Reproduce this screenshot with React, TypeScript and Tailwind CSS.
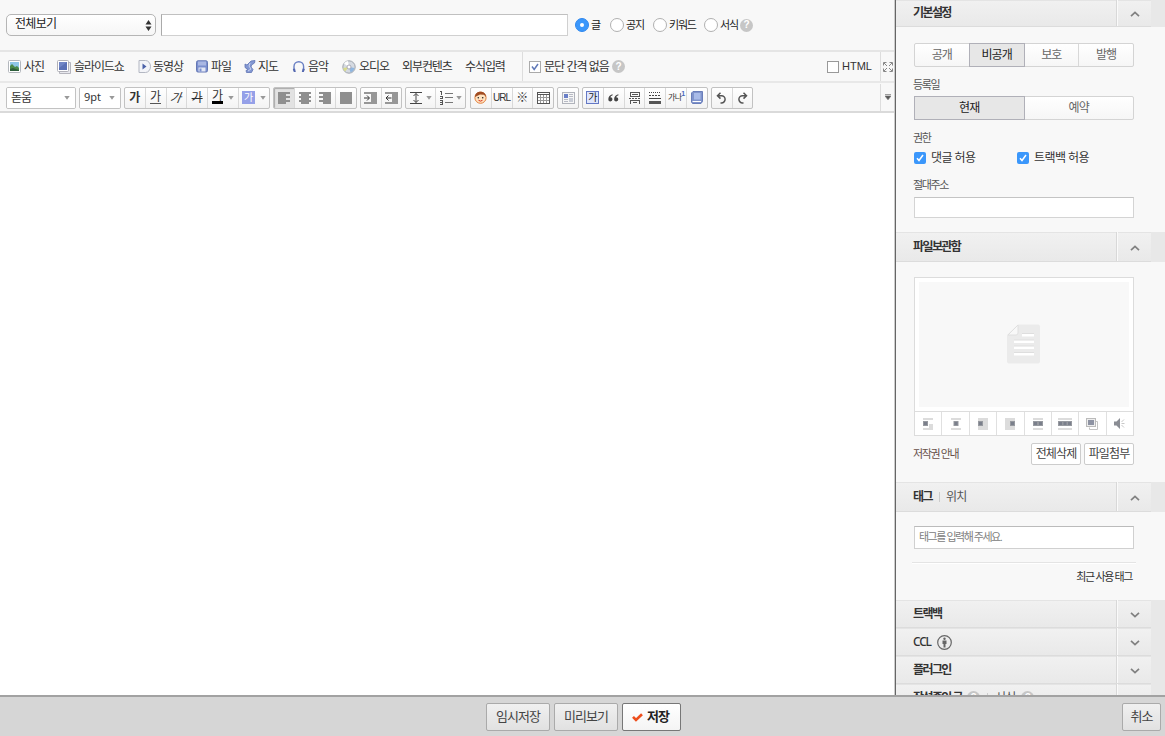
import React, { useState } from 'react';

const FONT = "font-['Liberation_Sans','Noto_Sans_CJK_KR',sans-serif]";

/* ---------- toolbar icons ---------- */

const PhotoIcon = () => (
  <svg width="13" height="13" viewBox="0 0 13 13">
    <rect x=".5" y=".5" width="12" height="12" rx="1" fill="#fff" stroke="#b3b7bd" />
    <rect x="2" y="2" width="9" height="9" fill="#8fc7e8" />
    <path d="M2 11V6l2-2 3 3 2-1 2 2v3z" fill="#4b8a4a" />
    <path d="M2 11V9l3-1 6 2v1z" fill="#2f5f3c" />
  </svg>
);

const SlideIcon = () => (
  <svg width="14" height="14" viewBox="0 0 14 14">
    <path d="M11.5 2.500H13.500V13.500H2.500V11.500" fill="#e8e8ee" stroke="#b5b5bd" />
    <rect x=".5" y=".5" width="11" height="11" rx="1" fill="#fff" stroke="#b0b0b8" />
    <rect x="2" y="2" width="8" height="8" fill="#5a70b6" />
    <path d="M2 2h8L2 8z" fill="#7085c6" />
  </svg>
);

const VideoIcon = () => (
  <svg width="13" height="13" viewBox="0 0 13 13">
    <path d="M1 .5H7.500A5 6 0 0 1 7.500 12.500H1z" fill="#f3f4f8" stroke="#b3b7c2" />
    <path d="M4.500 3.500L8.500 6.500L4.500 9.500z" fill="#4a60a8" />
  </svg>
);

const FileIcon = () => (
  <svg width="12" height="13" viewBox="0 0 12 13">
    <rect x=".5" y=".8" width="11" height="11.200" rx="1.500" fill="#7a8fce" stroke="#6477b4" />
    <rect x="2" y="1.500" width="8" height="4" fill="#a9b7e3" />
    <rect x="2.500" y="7.500" width="7" height="4" fill="#e4e8f5" />
    <rect x="3.500" y="8.500" width="2" height="3" fill="#7a8fce" />
  </svg>
);

const MapIcon = () => (
  <svg width="12" height="13" viewBox="0 0 12 13">
    <path d="M7 1l4-.5-.5 2.500L7.500 5 7 7l2 2.500-1.500 3H2.500L2 10.500l2-1L1 7.500V4l2 1z" fill="#8398d3" stroke="#5f74b4" strokeWidth=".8" />
    <path d="M6 3L5 6l2 3-3 2" stroke="#c9d3f0" fill="none" />
  </svg>
);

const MusicIcon = () => (
  <svg width="14" height="13" viewBox="0 0 14 13">
    <path d="M2 10.500V6.500a4.800 4.800 0 0 1 9.600 0v4" fill="none" stroke="#6a80c4" strokeWidth="1.400" />
    <path d="M.8 9l2.200-.5.800 3.500H1.800zM12.800 9l-2.200-.5-.8 3.500h2z" fill="#5468b0" />
  </svg>
);

const AudioIcon = () => (
  <svg width="14" height="14" viewBox="0 0 14 14">
    <circle cx="7" cy="7" r="6.200" fill="#d5dae1" stroke="#a0a5ad" />
    <path d="M7 7L2 3.500A6 6 0 0 1 6 1z" fill="#fff" />
    <path d="M7 7l5.500 1A6 6 0 0 1 8.500 12.500z" fill="#8fb6df" />
    <path d="M7 7L3 11.500A6 6 0 0 1 1.200 8z" fill="#d9dc8d" />
    <circle cx="7" cy="7" r="2" fill="#fff" stroke="#99a" strokeWidth=".8" />
  </svg>
);

const Help = () => (
  <span className="flex h-[13px] w-[13px] shrink-0 items-center justify-center rounded-full bg-[#c6c6c6] text-[10px] font-bold leading-none tracking-normal text-white">?</span>
);

const Caret = () => (
  <svg width="6" height="4" viewBox="0 0 6 4" className="shrink-0"><path d="M.3 0h5.400L3 3.800z" fill="#999" /></svg>
);

/* Paragraph blocks: one bar list per alignment, [x, width] for every line */
const Align = ({ rows }: { rows: number[][] }) => (
  <svg width="12" height="12" viewBox="0 0 12 12" shapeRendering="crispEdges" fill="#8f8f8f">
    {rows.map(([x, w], i) => <rect key={i} x={x} y={i * 2} width={w} height="2" />)}
  </svg>
);

const Indent = ({ out = false }: { out?: boolean }) => (
  <svg width="13" height="12" viewBox="0 0 13 12">
    <g fill="#979797" shapeRendering="crispEdges">
      <rect x="0" y="0" width="13" height="2" />
      <rect x="7" y="2" width="6" height="8" />
      <rect x="0" y="10" width="13" height="2" />
    </g>
    <path d={out ? 'M6.500 6H1M3.500 3.500L1 6l2.500 2.500' : 'M0 6h5M3 3.500L5.500 6 3 8.500'} fill="none" stroke="#333" />
  </svg>
);

const LineHeight = () => (
  <svg width="12" height="12" viewBox="0 0 12 12" fill="none" stroke="#444">
    <path d="M0 .5h12M0 11.500h12M6 1.500v9M3.500 4L6 1.500 8.500 4M3.500 8L6 10.500 8.500 8" />
  </svg>
);

const ListIcon = () => (
  <svg width="13" height="14" viewBox="0 0 13 14" fill="none" shapeRendering="crispEdges">
    <path d="M5 2.500h8M5 6.500h8M5 11.500h8" stroke="#777" />
    <path d="M0 .5h1.500v3M0 5.500h2v2H0M0 9.500h2.500v4H0M0 11.500h2" stroke="#555" />
  </svg>
);

const FaceIcon = () => (
  <svg width="13" height="13" viewBox="0 0 13 13">
    <circle cx="6.500" cy="6.700" r="5.600" fill="#ffe3c0" stroke="#e0803f" />
    <path d="M1 6C1 2 4 .7 6.500.7S12 2 12 6L10 3.800 6 3.500 3 5z" fill="#a04c22" />
    <circle cx="4.300" cy="6.800" r=".8" fill="#222" />
    <circle cx="8.700" cy="6.800" r=".8" fill="#222" />
    <path d="M4.500 9.300q2 1.600 4 0" stroke="#d52f1c" fill="none" />
  </svg>
);

const TableIcon = () => (
  <svg width="13" height="12" viewBox="0 0 13 12" shapeRendering="crispEdges">
    <rect x="0" y="0" width="13" height="12" fill="#fff" />
    <path d="M3.500 3v9M6.500 3v9M9.500 3v9M0 5.500h13M0 8.500h13" stroke="#999" />
    <path d="M.5 .5h12v11H.5zM0 2.500h13" fill="none" stroke="#555" />
  </svg>
);

const LayoutIcon = () => (
  <svg width="13" height="12" viewBox="0 0 13 12" shapeRendering="crispEdges">
    <rect x=".5" y=".5" width="12" height="11" fill="#f6f6f6" stroke="#b0b3bb" />
    <rect x="2" y="2" width="4" height="4" fill="#6a80c8" />
    <path d="M7 2.500h4M7 4.500h4M2 7.500h4M2 9.500h4" stroke="#b7bac4" />
    <rect x="7" y="6" width="4" height="4" fill="#c8ccd6" />
  </svg>
);

const QuoteIcon = () => (
  <svg width="11" height="8" viewBox="0 0 11 8" fill="#444">
    <path d="M4.500.3C2 .8.300 2.700.300 5.300A2.100 2.100 0 1 0 2.300 3.300Q2.800 1.900 4.700 1.200zM10.300.3C7.800.8 6.100 2.700 6.100 5.300a2.100 2.100 0 1 0 2-2Q8.600 1.900 10.500 1.200z" />
  </svg>
);

const FoldIcon = () => (
  <svg width="12" height="12" viewBox="0 0 12 12" shapeRendering="crispEdges" fill="none" stroke="#555">
    <path d="M1.500 0v4.500h9V0M1 .5h10M3 2.500h6" />
    <path d="M0 6.500h12" strokeDasharray="2 1" />
    <path d="M1.500 12V8.500h9V12M4 10.500h4" />
  </svg>
);

const RuleIcon = () => (
  <svg width="12" height="12" viewBox="0 0 12 12" shapeRendering="crispEdges" stroke="#444">
    <path d="M0 .5h12" strokeDasharray="1 1" />
    <path d="M0 3.500h12" strokeDasharray="2 1" />
    <path d="M0 6.500h12" />
    <path d="M0 10h12" strokeWidth="3" stroke="#555" />
  </svg>
);

const BookIcon = () => (
  <svg width="12" height="13" viewBox="0 0 12 13">
    <path d="M2 .5h9.500v10L10 12.500H1.500L.5 11V2z" fill="#8094cc" stroke="#6a7eba" />
    <rect x="3" y="2" width="6.500" height="6.500" fill="#a9bbe8" />
    <path d="M1.500 10.500h8.500" stroke="#fff" />
  </svg>
);

const UndoIcon = ({ flip = false }: { flip?: boolean }) => (
  <svg width="11" height="12" viewBox="0 0 11 12" className={flip ? '-scale-x-100' : ''} fill="none" stroke="#555" strokeWidth="1.500">
    <path d="M4.500.8L1.500 3.700l3 2.900M2 3.700h3.500a3.400 3.400 0 0 1 0 7.200H4.500" />
  </svg>
);

const ExpandIcon = () => (
  <svg width="10" height="10" viewBox="0 0 10 10" fill="none" stroke="#888">
    <path d="M.5 3.500v-3h3M6.500.5h3v3M9.500 6.500v3h-3M3.500 9.500h-3v-3M1 1l3 3M9 1L6 4M1 9l3-3M9 9L6 6" />
  </svg>
);

/* ---------- toolbar pieces ---------- */

const Group = ({ children, className = '' }: { children: React.ReactNode; className?: string }) => (
  <div className={`flex h-[22px] shrink-0 overflow-hidden rounded-[2px] border border-[#c2c2c2] bg-linear-to-b from-white to-[#f3f3f3] ${className}`}>{children}</div>
);

const Cell = ({ children, on = false, last = false, className = '' }: { children: React.ReactNode; on?: boolean; last?: boolean; className?: string }) => (
  <button className={`flex min-w-0 flex-1 items-center justify-center ${last ? '' : 'border-r border-[#d9d9d9]'} ${on ? 'bg-[#e2e2e2] shadow-[inset_1px_1px_1px_#aaa]' : ''} ${className}`}>{children}</button>
);

const media = [
  { label: '사진', icon: <PhotoIcon />, box: 'w-[49px]', gap: 'gap-[3px]' },
  { label: '슬라이드쇼', icon: <SlideIcon />, box: 'w-[81px]', gap: 'gap-[3px]' },
  { label: '동영상', icon: <VideoIcon />, box: 'w-[58px]', gap: 'gap-[2px]' },
  { label: '파일', icon: <FileIcon />, box: 'w-[48px]', gap: 'gap-[3px]' },
  { label: '지도', icon: <MapIcon />, box: 'w-[48px]', gap: 'gap-[2px]' },
  { label: '음악', icon: <MusicIcon />, box: 'w-[50px]', gap: 'gap-[2px]' },
  { label: '오디오', icon: <AudioIcon />, box: 'w-[60px]', gap: 'gap-[3px]' },
  { label: '외부컨텐츠', icon: null, box: 'w-[63px]', gap: '' },
  { label: '수식입력', icon: null, box: 'w-[57px]', gap: '' },
];

const kinds = [
  { label: '글', box: 'w-[35px]' },
  { label: '공지', box: 'w-[43px]' },
  { label: '키워드', box: 'w-[51px]' },
  { label: '서식', box: 'w-[36px]' },
];

const Editor = () => {
  const [kind, setKind] = useState('글');

  return (
    <main className="flex w-[895px] shrink-0 flex-col bg-white">
      <div className="flex h-[52px] items-center border-b-2 border-[#e5e5e5] bg-[#f8f8f8] pl-[6px]">
        <div className="flex h-[22px] w-[150px] items-center justify-between rounded-[5px] border border-[#b5b5b5] bg-linear-to-b from-white to-[#f6f6f6] pl-[8px] pr-[3px] text-[12px] tracking-[-0.7px] text-[#222]">
          <span className="-mt-[3px]">전체보기</span>
          <svg width="7" height="11" viewBox="0 0 7 11" fill="#333"><path d="M3.500 0L6.500 4.500h-6zM3.500 11L.5 6.500h6z" /></svg>
        </div>
        <input className="ml-[5px] h-[22px] w-[407px] border border-[#d0d0d0] border-l-[#aaa] border-t-[#c0c0c0] bg-white px-1 text-[12px] outline-none" />
        <div className="ml-[7px] flex text-[11px] tracking-[-1.2px] text-[#222]">
          {kinds.map(k => (
            <button key={k.label} onClick={() => setKind(k.label)} className={`flex shrink-0 items-center gap-[2px] whitespace-nowrap ${k.box}`}>
              <span className={`flex h-[14px] w-[14px] shrink-0 items-center justify-center rounded-full border ${kind === k.label ? 'border-[#3088ee] bg-[#3b97fb]' : 'border-[#b0b0b0] bg-white'}`}>
                {kind === k.label && <span className="h-[4px] w-[4px] rounded-full bg-white" />}
              </span>
              {k.label}
            </button>
          ))}
        </div>
        <Help />
      </div>

      <div className="flex h-[31px] items-center border-b-2 border-[#e8e8e8] bg-[#f8f8f8] pl-[8px] text-[12px] tracking-[-1.1px] text-[#333]">
        {media.map(m => (
          <button key={m.label} className={`flex shrink-0 items-center whitespace-nowrap ${m.box} ${m.gap}`}>
            {m.icon}
            {m.label}
          </button>
        ))}
        <div className="h-full w-px bg-[#ddd]" />
        <span className="ml-[6px] flex h-[12px] w-[12px] items-center justify-center border border-[#aaa] bg-white">
          <svg width="8" height="8" viewBox="0 0 8 8"><path d="M1 3.500l2.200 3L7 1" fill="none" stroke="#6079b8" strokeWidth="1.500" /></svg>
        </span>
        <span className="ml-[3px] w-[68px] whitespace-nowrap tracking-[-1px]">문단 간격 없음</span>
        <Help />
        <span className="ml-auto h-[12px] w-[12px] border border-[#999] bg-white" />
        <span className="ml-[3px] w-[38px] text-[11px] tracking-normal">HTML</span>
        <div className="flex h-full w-[15px] items-center justify-center border-l border-[#ddd]"><ExpandIcon /></div>
      </div>

      <div className="flex h-[30px] items-center border-b-2 border-[#dadada] bg-[#f8f8f8] pl-[6px] pt-px text-[#333]">
        <Group className="w-[70px]">
          <div className="flex flex-1 items-center justify-between bg-white pl-[4px] pr-[5px] text-[12px] tracking-[-1px]">돋움<Caret /></div>
        </Group>
        <Group className="ml-[3px] w-[42px]">
          <div className="flex flex-1 items-center justify-between bg-white pl-[4px] pr-[5px] font-['Noto_Sans',sans-serif] text-[11px]">9pt<Caret /></div>
        </Group>
        <Group className="ml-[3px] w-[146px] text-[12px]">
          <Cell className="font-bold">가</Cell>
          <Cell><span className="border-b border-[#555] leading-[12px]">가</span></Cell>
          <Cell><span className="-skew-x-[22deg]">가</span></Cell>
          <Cell><span className="line-through">가</span></Cell>
          <Cell className="flex-none w-[31px] gap-[5px]"><span className="border-b-[3px] border-black leading-[10px]">가</span><Caret /></Cell>
          <Cell last className="flex-none w-[30px] gap-[5px]"><span className="flex h-[13px] w-[13px] shrink-0 items-center justify-center bg-[#95a0e8] text-[10px] leading-none text-white">가</span><Caret /></Cell>
        </Group>
        <Group className="ml-[3px] w-[84px]">
          <Cell on><Align rows={[[0, 12], [0, 8], [0, 12], [0, 8], [0, 12], [0, 8]]} /></Cell>
          <Cell><Align rows={[[0, 12], [2, 8], [0, 12], [2, 8], [0, 12], [2, 8]]} /></Cell>
          <Cell><Align rows={[[0, 12], [4, 8], [0, 12], [4, 8], [0, 12], [4, 8]]} /></Cell>
          <Cell last><Align rows={[[0, 12], [0, 12], [0, 12], [0, 12], [0, 12], [0, 12]]} /></Cell>
        </Group>
        <Group className="ml-[3px] w-[42px]">
          <Cell><Indent /></Cell>
          <Cell last><Indent out /></Cell>
        </Group>
        <Group className="ml-[3px] w-[61px]">
          <Cell className="gap-[4px]"><LineHeight /><Caret /></Cell>
          <Cell last className="gap-[3px]"><ListIcon /><Caret /></Cell>
        </Group>
        <Group className="ml-[4px] w-[84px]">
          <Cell><FaceIcon /></Cell>
          <Cell className="text-[10px] tracking-[-0.9px]">URL</Cell>
          <Cell className="text-[12px]">※</Cell>
          <Cell last><TableIcon /></Cell>
        </Group>
        <Group className="ml-[3px] w-[22px]">
          <Cell last><LayoutIcon /></Cell>
        </Group>
        <Group className="ml-[3px] w-[126px]">
          <Cell><span className="flex h-[13px] w-[13px] items-center justify-center border border-[#6478c4] bg-[#dfe6fb] text-[10px] leading-none text-[#222]">가</span></Cell>
          <Cell><QuoteIcon /></Cell>
          <Cell><FoldIcon /></Cell>
          <Cell><RuleIcon /></Cell>
          <Cell className="whitespace-nowrap text-[8px] tracking-[-0.8px]">가나<sup className="text-[7px] font-bold text-[#4868bd]">1</sup></Cell>
          <Cell last><BookIcon /></Cell>
        </Group>
        <Group className="ml-[3px] w-[42px]">
          <Cell><UndoIcon /></Cell>
          <Cell last><UndoIcon flip /></Cell>
        </Group>
        <div className="-mt-px ml-auto flex h-full w-[15px] items-center justify-center border-l border-[#ddd]">
          <svg width="6" height="6" viewBox="0 0 6 6"><path d="M0 .5h6M0 2h6L3 5.800z" fill="#555" stroke="#777" strokeWidth=".7" /></svg>
        </div>
      </div>
    </main>
  );
};

/* ---------- sidebar ---------- */

const Head = ({ children, open = false, className = 'h-[28px]' }: { children: React.ReactNode; open?: boolean; className?: string }) => (
  <div className={`flex shrink-0 bg-[#e8e8e8] ${className}`}>
    <div className="flex w-[255px] border-b border-[#dcdcdc] bg-linear-to-b from-[#f1f1f1] to-[#e9e9e9] shadow-[inset_0_1px_0_#e4e4e4]">
      <div className="flex w-[221px] items-center border-r border-[#d8d8d8] pl-[17px] text-[12px] font-bold tracking-[-1.6px] text-[#333]">{children}</div>
      <div className="flex flex-1 items-center justify-center border-l border-[#fafafa] pt-[2px]">
        <svg width="10" height="6" viewBox="0 0 10 6" className={open ? '' : 'rotate-180'}><path d="M1 5.200l4-3.800 4 3.800" fill="none" stroke="#808080" strokeWidth="1.700" /></svg>
      </div>
    </div>
  </div>
);

const Segments = ({ items, active }: { items: string[]; active: string }) => (
  <div className="flex h-[24px] w-[220px] rounded-[2px] border border-[#d4d4d4] bg-linear-to-b from-white to-[#f6f6f6] text-[12px] tracking-[-0.9px]">
    {items.map((item, i) => (
      <button
        key={item}
        className={`flex flex-1 items-center justify-center ${item === active ? `-my-px border border-[#b0b0b8] bg-[#e7e7e7] text-[#222] ${i === 0 ? '-ml-px' : ''}` : 'text-[#666]'} ${i > 0 && item !== active && items[i - 1] !== active ? 'border-l border-[#d8d8d8]' : ''}`}
      >
        {item}
      </button>
    ))}
  </div>
);

const Check = ({ label, className = '' }: { label: string; className?: string }) => (
  <label className={`flex items-center gap-[5px] text-[12px] tracking-[-0.6px] text-[#333] ${className}`}>
    <span className="flex h-[12px] w-[12px] items-center justify-center rounded-[2px] bg-[#3b97fb]">
      <svg width="8" height="8" viewBox="0 0 8 8"><path d="M1 4.200l2 2.300L7 1" fill="none" stroke="#fff" strokeWidth="1.500" /></svg>
    </span>
    {label}
  </label>
);

const Label = ({ children }: { children: React.ReactNode }) => (
  <div className="-ml-px h-[14px] text-[11px] leading-[14px] tracking-[-1.4px] text-[#555]">{children}</div>
);

/* Gray area is the text, dark square is the picture inside it */
const placements = [
  { gray: ['M0 0h10v2H0z', 'M6 6h4v4H6z', 'M0 10h10v2H0z'], dots: [0] },
  { gray: ['M0 0h10v2H0z', 'M0 10h10v2H0z'], dots: [2.5] },
  { gray: ['M0 0h10v12H0z'], dots: [0] },
  { gray: ['M0 0h10v12H0z'], dots: [5] },
  { gray: ['M0 0h10v2H0z', 'M0 10h10v2H0z'], dots: [0, 5] },
  { gray: ['M-2 0h14v2H-2z', 'M-2 10h14v2H-2z'], dots: [-2, 2.5, 7] },
];

const FileTools = () => (
  <div className="flex h-[24px] border-t border-[#ddd]">
    {placements.map((p, i) => (
      <button key={i} className="flex flex-1 items-center justify-center border-r border-[#e0e0e0]">
        <svg width="14" height="12" viewBox="-2 0 14 12">
          {p.gray.map(d => <path key={d} d={d} fill="#dcdcdc" />)}
          {p.dots.map(x => <rect key={x} x={x + 0.5} y="3.500" width="4" height="4" fill="#7a7f8b" stroke="#96999f" />)}
        </svg>
      </button>
    ))}
    <button className="flex flex-1 items-center justify-center border-r border-[#e0e0e0]">
      <svg width="12" height="12" viewBox="0 0 12 12"><path d="M9.500 3.500h2v8h-8v-2" fill="none" stroke="#c4c4c4" /><rect x=".5" y=".5" width="9" height="8" fill="#eee" stroke="#bbb" /><rect x="2" y="2" width="6" height="5" fill="#8e93a3" /></svg>
    </button>
    <button className="flex flex-1 items-center justify-center">
      <svg width="11" height="11" viewBox="0 0 11 11"><path d="M0 3.500h2.500L6 0v11L2.500 7.500H0z" fill="#8a8d94" /><path d="M7.500 4L10 1.500M7.500 5.500h3M7.500 7L10 9.500" stroke="#c7c7c7" fill="none" /></svg>
    </button>
  </div>
);

const Sidebar = () => (
  <aside className="flex min-w-0 flex-1 flex-col overflow-hidden border-l border-[#666] bg-[#f8f8f8] shadow-[-1px_0_0_#ccc]">
    <Head open className="h-[27px]">기본설정</Head>
    <div className="flex h-[205px] shrink-0 flex-col pl-[18px] pt-[16px]">
      <Segments items={['공개', '비공개', '보호', '발행']} active="비공개" />
      <div className="mt-[11px]"><Label>등록일</Label></div>
      <div className="mt-[4px]"><Segments items={['현재', '예약']} active="현재" /></div>
      <div className="mt-[11px]"><Label>권한</Label></div>
      <div className="mt-[4px] flex h-[18px] items-center">
        <Check label="댓글 허용" className="w-[103px]" />
        <Check label="트랙백 허용" />
      </div>
      <div className="mt-[11px]"><Label>절대주소</Label></div>
      <input className="mt-[5px] h-[21px] w-[220px] border border-[#d4d4d4] border-t-[#c4c4c4] bg-white px-1 text-[12px] outline-none" />
    </div>

    <Head open className="h-[30px]">파일보관함</Head>
    <div className="flex h-[220px] shrink-0 flex-col pl-[18px] pt-[15px]">
      <div className="flex h-[159px] w-[220px] flex-col border border-[#dcdcdc] bg-white">
        <div className="flex flex-1 p-[4px]">
          <div className="flex flex-1 items-center justify-center bg-[#f8f8f8]">
            <svg width="34" height="40" viewBox="0 0 34 40" className="-mt-[2px]">
              <path d="M11 .5H31a2 2 0 0 1 2 2v35a2 2 0 0 1-2 2H2a2 2 0 0 1-2-2V11z" fill="#ebebeb" />
              <path d="M1 11L11 1v8a2 2 0 0 1-2 2z" fill="#f8f8f8" stroke="#e0e0e0" />
              <path d="M15 11h12M7 17.500h20M7 23.500h20M7 30h20" stroke="#fff" strokeWidth="3" />
              <path d="M15 9.500h12M7 16h20M7 22h20M7 28.500h20" stroke="#dedede" />
            </svg>
          </div>
        </div>
        <FileTools />
      </div>
      <div className="mt-[7px] flex w-[220px] items-center justify-between">
        <span className="-ml-px text-[11px] tracking-[-1.4px] text-[#664f48]">저작권 안내</span>
        <div className="flex gap-[3px] text-[12px] tracking-[-0.9px] text-[#444]">
          <button className="h-[22px] w-[50px] whitespace-nowrap rounded-[2px] border border-[#ccc] bg-white">전체삭제</button>
          <button className="h-[22px] w-[50px] whitespace-nowrap rounded-[2px] border border-[#ccc] bg-white">파일첨부</button>
        </div>
      </div>
    </div>

    <Head open className="h-[30px]">
      태그
      <span className="ml-[7px] h-[10px] w-px bg-[#ccc]" />
      <span className="ml-[6px] font-normal tracking-[-0.8px] text-[#555]">위치</span>
    </Head>
    <div className="flex h-[88px] shrink-0 flex-col pl-[16px] pt-[14px]">
      <input placeholder="태그를 입력해 주세요." className="ml-[2px] h-[23px] w-[220px] border border-[#d0d0d0] border-t-[#bbb] bg-white pb-[2px] pl-[4px] text-[11px] tracking-[-1.5px] outline-none placeholder:text-[#808080]" />
      <div className="mt-[13px] h-[2px] w-[224px] border-t border-[#e4e4e4] bg-white" />
      <div className="mt-[5px] w-[220px] text-right text-[11px] leading-[16px] tracking-[-1.4px] text-[#333]">최근 사용 태그</div>
    </div>

    <Head>트랙백</Head>
    <Head>
      <span className="font-['Noto_Sans',sans-serif] font-medium tracking-[-1.2px]">CCL</span>
      <svg width="15" height="15" viewBox="0 0 15 15" className="ml-[6px] mt-px">
        <circle cx="7.500" cy="7.500" r="6.800" fill="none" stroke="#666" strokeWidth="1.200" />
        <circle cx="7.500" cy="3.700" r="1.200" fill="#666" />
        <path d="M5.500 5.500h4v3.500h-1v3.500h-2V9h-1z" fill="#666" />
      </svg>
    </Head>
    <Head>플러그인</Head>
    <Head>
      작성중인 글
      <span className="ml-[5px]"><Help /></span>
      <span className="ml-[7px] h-[10px] w-px bg-[#ccc]" />
      <span className="ml-[7px] mr-[6px] font-normal tracking-[-0.8px] text-[#555]">서식</span>
      <Help />
    </Head>
  </aside>
);

const footButton = 'flex h-[28px] items-center justify-center rounded-[2px] border text-[13px] tracking-[-0.9px]';

const App: React.FC = () => (
  <div className={`flex h-[736px] w-[1165px] flex-col overflow-hidden ${FONT}`}>
    <div className="flex min-h-0 flex-1">
      <Editor />
      <Sidebar />
    </div>
    <footer className="flex h-[41px] shrink-0 items-center border-t-2 border-[#a2a2a2] bg-[#d6d6d6] pb-px pl-[486px] pr-[4px] pt-[2px]">
      <div className="flex gap-[4px]">
        <button className={`${footButton} w-[64px] border-[#aaa] bg-linear-to-b from-[#f0f0f0] to-[#e1e1e1] text-[#444]`}>임시저장</button>
        <button className={`${footButton} w-[64px] border-[#aaa] bg-linear-to-b from-[#f0f0f0] to-[#e1e1e1] text-[#444]`}>미리보기</button>
        <button className={`${footButton} w-[59px] gap-[4px] border-[#777] bg-linear-to-b from-white to-[#f4f4f4] pr-[2px] font-bold text-[#222]`}>
          <svg width="11" height="9" viewBox="0 0 11 9"><path d="M1 3.800l3 3.200L10 1.200" fill="none" stroke="#ee4e1c" strokeWidth="2.600" /></svg>
          저장
        </button>
      </div>
      <button className={`${footButton} ml-auto w-[39px] border-[#aaa] bg-linear-to-b from-[#f0f0f0] to-[#e1e1e1] text-[#444]`}>취소</button>
    </footer>
  </div>
);

export default App;
